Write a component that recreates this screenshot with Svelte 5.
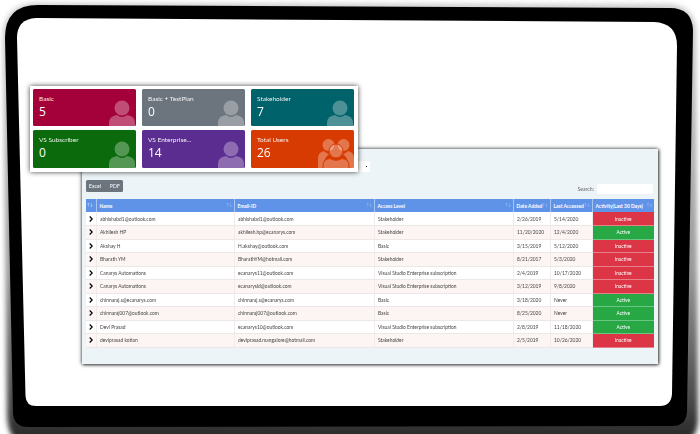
<script>
  const cards = [
    { label: 'Basic', value: 5, tone: 'crimson', icon: 'user' },
    { label: 'Basic + TestPlan', value: 0, tone: 'gray', icon: 'user' },
    { label: 'Stakeholder', value: 7, tone: 'teal', icon: 'user' },
    { label: 'VS Subscriber', value: 0, tone: 'green', icon: 'user' },
    { label: 'VS Enterprise...', value: 14, tone: 'purple', icon: 'user' },
    { label: 'Total Users', value: 26, tone: 'orange', icon: 'users' }
  ];

  const vse = 'Visual Studio Enterprise subscription';
  const rows = [
    ['abhishabd1@outlook.com', 'abhishabd1@outlook.com', 'Stakeholder', '2/26/2019', '5/14/2020', 'Inactive'],
    ['Akhilesh HP', 'akhilesh.hp@ecanarys.com', 'Stakeholder', '11/20/2020', '12/4/2020', 'Active'],
    ['Akshay H', 'H.akshay@outlook.com', 'Basic', '3/15/2019', '5/12/2020', 'Inactive'],
    ['Bharath YM', 'BharathYM@hotmail.com', 'Stakeholder', '8/21/2017', '5/3/2020', 'Inactive'],
    ['Canarys Automations', 'ecanarys11@outlook.com', vse, '2/4/2019', '10/17/2020', 'Inactive'],
    ['Canarys Automations', 'ecanarysld@outlook.com', vse, '3/12/2019', '9/8/2020', 'Inactive'],
    ['chinnaraj.s@ecanarys.com', 'chinnaraj.s@ecanarys.com', 'Basic', '3/18/2020', 'Never', 'Active'],
    ['chinnaraj007@outlook.com', 'chinnaraj007@outlook.com', 'Basic', '8/25/2020', 'Never', 'Active'],
    ['Devi Prasad', 'ecanarys10@outlook.com', vse, '2/8/2019', '11/18/2020', 'Active'],
    ['deviprasad kotian', 'deviprasad.mangalore@hotmail.com', 'Stakeholder', '2/5/2019', '10/26/2020', 'Inactive']
  ];

  const columns = ['Name', 'Email-ID', 'Access Level', 'Date Added', 'Last Accessed', 'Activity(Last 30 Days)'];
</script>

<div class="stage">
  <!-- the tablet outline is slightly skewed in the shot, so it is a drawn shape -->
  <svg class="device" width="700" height="434" viewBox="0 0 700 434">
    <defs>
      <linearGradient id="shade" x1="0" y1="0" x2="0" y2="1">
        <stop offset="0" stop-color="#cfcfcf" />
        <stop offset="0.6" stop-color="#9a9a9a" />
        <stop offset="0.9" stop-color="#4a4a4a" />
        <stop offset="1" stop-color="#222" />
      </linearGradient>
      <filter id="soft" x="-5%" y="-5%" width="110%" height="110%">
        <feGaussianBlur stdDeviation="2.500" />
      </filter>
      <filter id="edge"><feGaussianBlur stdDeviation="0.500" /></filter>
    </defs>
    <path d="M38 3 L668 4 Q694 5 696 30 L698 420 Q697 445 672 445 L30 445 Q8 445 7 415 L3 38 Q3 3 38 3Z" fill="url(#shade)" filter="url(#soft)" />
    <path d="M38 5 L670 8 Q692 8 693 30 L687 412 Q686 426 672 426 L28 427 Q14 427 13 413 L5 38 Q5 5 38 5Z" fill="#000" filter="url(#edge)" />
    <path d="M36 18 L654 22 Q677 23 677 46 L672 394 Q671 406 660 406 L36 406 Q26 406 25.500 396 L17 38 Q17 19 36 18Z" fill="#fff" filter="url(#edge)" />
  </svg>

  <section class="table-panel">
    <div class="select-row"><span class="select"><i></i></span></div>
    <div class="tools">
      <div class="buttons"><span>Excel</span><span>PDF</span></div>
      <label class="search">Search:<span class="search-box"></span></label>
    </div>
    <table>
      <colgroup>
        <col style="width:10px" /><col style="width:138px" /><col style="width:140px" />
        <col style="width:139px" /><col style="width:37px" /><col style="width:42px" /><col style="width:62px" />
      </colgroup>
      <thead>
        <tr>
          <th><span class="sort first">↑↓</span></th>
          {#each columns as col}
            <th>{col}<span class="sort">↑↓</span></th>
          {/each}
        </tr>
      </thead>
      <tbody>
        {#each rows as row}
          <tr>
            <td class="toggle">
              <svg width="4" height="6" viewBox="0 0 4 6"><path d="M0.700 0.500 L3.200 3 L0.700 5.500" fill="none" stroke="#000" stroke-width="1.200" /></svg>
            </td>
            {#each row.slice(0, 5) as cell}
              <td>{cell}</td>
            {/each}
            <td class="status" class:active={row[5] === 'Active'}>{row[5]}</td>
          </tr>
        {/each}
      </tbody>
    </table>
  </section>

  <section class="cards-panel">
    {#each cards as card}
      <div class="card {card.tone}">
        <div class="label">{card.label}</div>
        <div class="value">{card.value}</div>
        {#if card.icon === 'user'}
          <svg class="icon" width="26" height="30" viewBox="0 0 26 30">
            <circle cx="13" cy="9" r="7.500" />
            <path d="M0 30 L0 24 Q0 17 8 16 Q13 20 18 16 Q26 17 26 24 L26 30Z" />
          </svg>
        {:else}
          <svg class="icon wide" width="36" height="32" viewBox="0 0 36 32">
            <circle cx="10.500" cy="8" r="6" />
            <circle cx="25.500" cy="8" r="6" />
            <path d="M0 31 L0 22 Q0 15 6 14 Q9 17 11 17 Q5 22 5 31Z" />
            <path d="M36 31 L36 22 Q36 15 30 14 Q27 17 25 17 Q31 22 31 31Z" />
            <circle cx="18" cy="14" r="7" stroke="#d83b01" stroke-width="1" />
            <path d="M5 32 L5 29 Q5 22 12 21.500 Q18 25 24 21.500 Q31 22 31 29 L31 32Z" stroke="#d83b01" stroke-width="1" />
          </svg>
        {/if}
      </div>
    {/each}
  </section>
</div>

<style>
  :global(body) {
    margin: 0;
    background: #fff;
    overflow: hidden;
  }

  .stage {
    position: relative;
    width: 700px;
    height: 434px;
    overflow: hidden;
    font-family: Lato, "Liberation Sans", sans-serif;
  }

  .device {
    position: absolute;
    left: 0;
    top: 0;
  }

  /* screenshot is a soft upscaled one, hence the blur on both panels */
  .cards-panel {
    position: absolute;
    left: 30px;
    top: 86px;
    width: 322px;
    height: 80px;
    padding: 3px;
    display: grid;
    grid-template-columns: 103px 103px 103px;
    grid-template-rows: 37px 38px;
    column-gap: 6px;
    row-gap: 4px;
    background: #fff;
    box-shadow: 0 0 5px rgba(0, 0, 0, 0.75);
    filter: blur(0.35px);
  }

  .card {
    position: relative;
    overflow: hidden;
    border-radius: 1.500px;
    padding: 5px 6px 0;
    color: #fff;
  }

  .crimson { background: #a4003a; }
  .gray { background: #6c757d; }
  .teal { background: #00626a; }
  .green { background: #0b6a0b; }
  .purple { background: #5c2d91; }
  .orange { background: #d83b01; }

  .label {
    font-size: 6.500px;
    line-height: 9px;
    opacity: 0.92;
  }

  .value {
    margin-top: 1px;
    font-family: "Open Sans", sans-serif;
    font-size: 12px;
    line-height: 16px;
    font-weight: 500;
  }

  .icon {
    position: absolute;
    right: 1px;
    top: 10px;
    fill: rgba(255, 255, 255, 0.3);
  }

  .icon.wide {
    right: 0;
    top: 7px;
  }

  .table-panel {
    position: absolute;
    left: 82px;
    top: 149px;
    width: 568px;
    height: 199px;
    padding: 12px 4px 4px;
    background: #ecf4f7;
    box-shadow: 0 0 4px rgba(0, 0, 0, 0.8), 1px 1px 3px rgba(0, 0, 0, 0.5);
    filter: blur(0.35px);
  }

  .select-row {
    display: flex;
    justify-content: flex-end;
    height: 11px;
    padding-right: 284px;
  }

  .select {
    width: 110px;
    height: 11px;
    background: #fff;
    border-radius: 1px;
    display: flex;
    align-items: center;
    justify-content: flex-end;
    padding-right: 3px;
    box-sizing: border-box;
  }

  .select i {
    width: 1.500px;
    height: 1.500px;
    background: #222;
  }

  .tools {
    display: flex;
    justify-content: space-between;
    align-items: flex-end;
    margin-top: 8px;
    height: 14px;
    margin-bottom: 5px;
  }

  .buttons {
    display: flex;
    align-items: center;
    gap: 9px;
    height: 12px;
    width: 37px;
    padding-left: 3px;
    box-sizing: border-box;
    margin-bottom: 2px;
    background: #6c757d;
    border-radius: 1.500px;
    color: #fff;
    font-size: 5.200px;
  }

  .search {
    display: flex;
    align-items: center;
    gap: 3px;
    color: #666;
    font-size: 5.200px;
    padding-right: 1px;
  }

  .search-box {
    width: 56px;
    height: 10px;
    background: #fff;
    border-radius: 1px;
  }

  table {
    width: 568px;
    table-layout: fixed;
    border-collapse: collapse;
    font-size: 4.900px;
    color: #444;
    background: #fff;
  }

  th {
    position: relative;
    height: 13px;
    padding: 0 3px;
    background: #5f93e8;
    color: #fff;
    font-weight: 700;
    text-align: left;
    white-space: nowrap;
    border-right: 1px solid #a9c5f2;
    font-size: 4.900px;
  }

  th:last-child {
    border-right: none;
  }

  .sort {
    position: absolute;
    right: 1.500px;
    top: 3px;
    font-weight: 400;
    font-size: 4px;
    opacity: 0.45;
  }

  .sort.first {
    right: 2.500px;
    opacity: 0.85;
  }

  td {
    height: 13.500px;
    padding: 0 3.500px;
    white-space: nowrap;
    overflow: hidden;
    border-right: 1px solid #f1ecec;
    border-bottom: 1px solid #eee7e7;
    box-sizing: border-box;
  }

  tbody tr:nth-child(even) td {
    background: #fdf4f4;
  }

  td.toggle {
    padding: 0 0 0 3px;
  }

  td.toggle svg {
    display: block;
  }

  td.status,
  tbody tr:nth-child(even) td.status {
    padding: 0;
    background: #dc3545;
    color: #fff;
    text-align: center;
    border-right: none;
    border-bottom: 1px solid #e8808b;
  }

  td.status.active,
  tbody tr:nth-child(even) td.status.active {
    background: #28a745;
    border-bottom-color: #6cc583;
  }
</style>
